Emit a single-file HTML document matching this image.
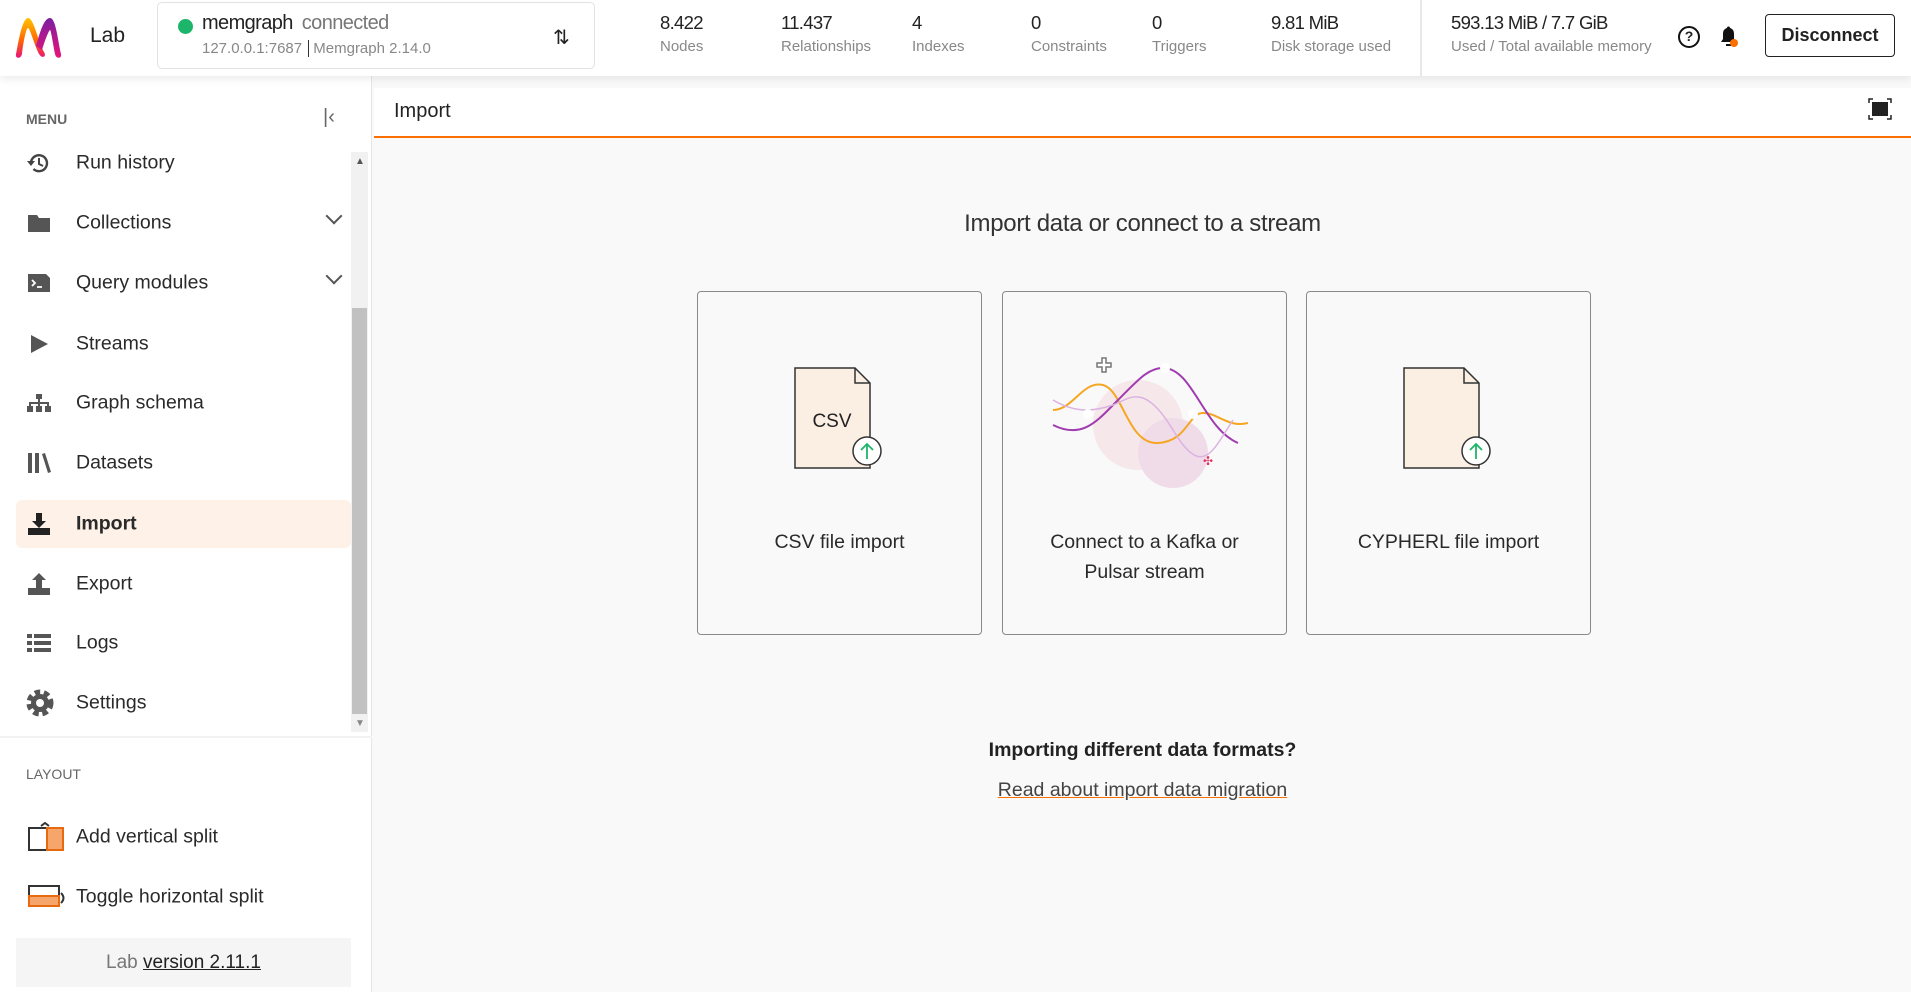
<!DOCTYPE html>
<html><head><meta charset="utf-8"><style>
*{box-sizing:border-box;margin:0;padding:0}
body{width:1911px;height:992px;overflow:hidden;background:#f9f9f9;font-family:"Liberation Sans",sans-serif;color:#222;position:relative}
.abs{position:absolute}
.hdr{left:0;top:0;width:1911px;height:76px;background:#fff;box-shadow:0 3px 8px rgba(0,0,0,.08);z-index:2}
.conn{left:157px;top:2px;width:438px;height:67px;border:1px solid #e2e2e2;border-radius:5px}
.stv{font-size:18.5px;letter-spacing:-.7px;color:#222}
.stl{font-size:15px;color:#888}
.side{left:0;top:76px;width:372px;height:916px;background:#fff;border-right:1px solid #e6e6e6}
.mi{position:absolute;left:76px;font-size:19.5px;color:#2a2a2a;transform:translateY(-50%)}
.ic{position:absolute;left:27px;transform:translateY(-50%)}
.card{position:absolute;top:291px;width:285px;height:344px;border:1.5px solid #8a8a8a;border-radius:4px;background:#f9f9f9}
.ct{position:absolute;left:0;right:0;text-align:center;font-size:19.5px;color:#2a2a2a;line-height:30px}
</style></head><body>
<div class="abs hdr">
  <svg class="abs" style="left:14px;top:14px" width="50" height="46" viewBox="0 0 50 46"><defs><linearGradient id="g" x1="0" y1="0" x2="0" y2="1"><stop offset="0" stop-color="#ffc400"/><stop offset=".55" stop-color="#ff6a00"/><stop offset="1" stop-color="#e8147a"/></linearGradient><linearGradient id="g2" x1="0" y1="0" x2="0" y2="1"><stop offset="0" stop-color="#7b1fa2"/><stop offset="1" stop-color="#e8147a"/></linearGradient></defs><path d="M2 40 C4 30 8 4 14 4 C20 4 24 28 30 38 C33 43 28 45 25 40 C20 30 16 14 14 14 C12 14 9 30 8 40 C7 45 1 45 2 40z" fill="url(#g)"/><path d="M22 32 C26 18 30 4 36 4 C42 4 44 28 47 40 C48 45 42 45 41 40 C39 30 37 16 36 16 C35 16 31 26 28 36z" fill="url(#g2)"/></svg>
  <div class="abs" style="left:90px;top:24px;font-size:21px">Lab</div>
  <div class="abs conn">
    <div class="abs" style="left:20px;top:16px;width:15px;height:15px;border-radius:50%;background:#1db56a"></div>
    <div class="abs" style="left:44px;top:9px;font-size:20px;letter-spacing:-.6px">memgraph <span style="color:#777;margin-left:4px">connected</span></div>
    <div class="abs" style="left:44px;top:37px;font-size:15px;color:#888">127.0.0.1:7687 <span style="border-left:1.5px solid #333;padding-left:4px;margin-left:2px">Memgraph 2.14.0</span></div>
    <div class="abs" style="left:395px;top:22px;font-size:20px">⇅</div>
  </div>
  <div class="abs" style="left:660px;top:12px"><div class="stv">8.422</div><div class="stl" style="margin-top:4px">Nodes</div></div>
  <div class="abs" style="left:781px;top:12px"><div class="stv">11.437</div><div class="stl" style="margin-top:4px">Relationships</div></div>
  <div class="abs" style="left:912px;top:12px"><div class="stv">4</div><div class="stl" style="margin-top:4px">Indexes</div></div>
  <div class="abs" style="left:1031px;top:12px"><div class="stv">0</div><div class="stl" style="margin-top:4px">Constraints</div></div>
  <div class="abs" style="left:1152px;top:12px"><div class="stv">0</div><div class="stl" style="margin-top:4px">Triggers</div></div>
  <div class="abs" style="left:1271px;top:12px"><div class="stv">9.81 MiB</div><div class="stl" style="margin-top:4px">Disk storage used</div></div>
  <div class="abs" style="left:1420px;top:0;width:2px;height:76px;background:#e8e8e8"></div>
  <div class="abs" style="left:1451px;top:12px"><div class="stv">593.13 MiB / 7.7 GiB</div><div class="stl" style="margin-top:4px">Used / Total available memory</div></div>
  <div class="abs" style="left:1678px;top:26px;width:22px;height:22px;border:2.5px solid #111;border-radius:50%;font-size:14px;font-weight:bold;text-align:center;line-height:17px">?</div>
  <svg class="abs" style="left:1718px;top:25px" width="22" height="24" viewBox="0 0 22 24"><path d="M9 3a1.5 1.5 0 013 0c3 1 4 3 4 6v5l2 3H3l2-3V9c0-3 1-5 4-6z" fill="#111"/><rect x="8" y="19" width="5" height="2" fill="#111"/><circle cx="16" cy="18" r="4" fill="#fb6e00"/></svg>
  <div class="abs" style="left:1765px;top:14px;width:130px;height:43px;border:1.5px solid #222;border-radius:4px;text-align:center;line-height:40px;font-size:18px;font-weight:bold">Disconnect</div>
</div>

<div class="abs side">
  <div class="abs" style="left:26px;top:35px;font-size:14px;color:#666;font-weight:bold">MENU</div>
  <div class="abs" style="left:323px;top:30px;font-size:20px;color:#666">|&lsaquo;</div>
  <div class="abs" style="left:351px;top:76px;width:17px;height:580px;background:#f1f1f1"></div>
  <div class="abs" style="left:352px;top:232px;width:15px;height:406px;background:#c1c1c1"></div>
  <div class="abs" style="left:355px;top:80px;font-size:10px;color:#555">▲</div>
  <div class="abs" style="left:355px;top:642px;font-size:10px;color:#888">▼</div>
  <div class="abs" style="left:16px;top:424px;width:335px;height:48px;background:#fdf1e8;border-radius:6px"></div>
</div>
<div class="abs" style="left:0;top:76px;width:372px;height:916px">
  <svg class="ic" style="top:87px" width="24" height="22" viewBox="0 0 24 22"><path d="M4 11a8 8 0 1 1 2.5 6" stroke="#444" stroke-width="2.4" fill="none"/><path d="M0 9h8l-4 5z" fill="#444"/><path d="M12 6v6l4 2" stroke="#444" stroke-width="2" fill="none"/></svg><div class="mi" style="top:87px">Run history</div>
  <svg class="ic" style="top:147px" width="24" height="20" viewBox="0 0 24 20"><path d="M1 2h9l2 3h11v14H1z" fill="#555"/></svg><div class="mi" style="top:147px">Collections</div><div class="abs" style="left:328px;top:134px;width:12px;height:12px;border-right:2px solid #555;border-bottom:2px solid #555;transform:rotate(45deg)"></div>
  <svg class="ic" style="top:207px" width="24" height="20" viewBox="0 0 24 20"><path d="M1 1h18l4 4v14H1z" fill="#555"/><path d="M5 7l3 3-3 3M10 14h5" stroke="#fff" stroke-width="1.8" fill="none"/></svg><div class="mi" style="top:207px">Query modules</div><div class="abs" style="left:328px;top:194px;width:12px;height:12px;border-right:2px solid #555;border-bottom:2px solid #555;transform:rotate(45deg)"></div>
  <svg class="ic" style="top:268px" width="24" height="22" viewBox="0 0 24 22"><path d="M4 2l17 9-17 9z" fill="#555"/></svg><div class="mi" style="top:268px">Streams</div>
  <svg class="ic" style="top:327px" width="24" height="20" viewBox="0 0 24 20"><rect x="9" y="1" width="6" height="5" fill="#555"/><path d="M12 6v4M3 13v-3h18v3M12 10v3" stroke="#555" stroke-width="2" fill="none"/><rect x="0" y="13" width="6" height="6" fill="#555"/><rect x="9" y="13" width="6" height="6" fill="#555"/><rect x="18" y="13" width="6" height="6" fill="#555"/></svg><div class="mi" style="top:327px">Graph schema</div>
  <svg class="ic" style="top:387px" width="24" height="22" viewBox="0 0 24 22"><rect x="1" y="1" width="4" height="20" fill="#555"/><rect x="8" y="1" width="4" height="20" fill="#555"/><path d="M15 2l3-1 6 19-3 1z" fill="#555"/></svg><div class="mi" style="top:387px">Datasets</div>
  <svg class="ic" style="top:448px" width="24" height="24" viewBox="0 0 24 24"><path d="M9 1h6v8h4l-7 7-7-7h4z" fill="#222"/><rect x="1" y="16" width="22" height="7" fill="#222"/></svg><div class="mi" style="top:448px;font-weight:bold">Import</div>
  <svg class="ic" style="top:508px" width="24" height="24" viewBox="0 0 24 24"><path d="M9 16h6V8h4l-7-7-7 7h4z" fill="#555"/><rect x="1" y="16" width="22" height="7" fill="#555"/></svg><div class="mi" style="top:508px">Export</div>
  <svg class="ic" style="top:567px" width="24" height="20" viewBox="0 0 24 20"><g fill="#555"><rect x="0" y="1" width="5" height="4"/><rect x="7" y="1" width="17" height="4"/><rect x="0" y="8" width="5" height="4"/><rect x="7" y="8" width="17" height="4"/><rect x="0" y="15" width="5" height="4"/><rect x="7" y="15" width="17" height="4"/></g></svg><div class="mi" style="top:567px">Logs</div>
  <svg class="ic" style="top:627px;left:24px" width="32" height="32" viewBox="0 0 32 32"><circle cx="16" cy="16" r="10" fill="none" stroke="#555" stroke-width="7" stroke-dasharray="5 3.4"/><circle cx="16" cy="16" r="9" fill="#555"/><circle cx="16" cy="16" r="4" fill="#fff"/></svg><div class="mi" style="top:627px">Settings</div>
  <div class="abs" style="left:0;top:660px;width:372px;height:2px;background:#f3f3f3"></div>
  <div class="abs" style="left:26px;top:690px;font-size:14px;color:#666">LAYOUT</div>
  <svg class="ic" style="top:761px" width="38" height="30" viewBox="0 0 38 30"><rect x="2" y="6" width="18" height="22" fill="none" stroke="#333" stroke-width="2"/><rect x="20" y="6" width="16" height="22" fill="#f7a66b" stroke="#e86a10" stroke-width="2"/><path d="M14 4l4-3 4 3" stroke="#333" stroke-width="2" fill="none"/></svg><div class="mi" style="top:761px">Add vertical split</div>
  <svg class="ic" style="top:821px" width="40" height="28" viewBox="0 0 40 28"><rect x="2" y="3" width="30" height="10" fill="none" stroke="#333" stroke-width="2"/><rect x="2" y="13" width="30" height="10" fill="#f7a66b" stroke="#e86a10" stroke-width="2"/><path d="M34 10q5 5 0 10" stroke="#333" stroke-width="2" fill="none"/></svg><div class="mi" style="top:821px">Toggle horizontal split</div>
  <div class="abs" style="left:16px;top:862px;width:335px;height:49px;background:#f5f5f5;text-align:center;line-height:49px;font-size:19px;color:#777">Lab <span style="color:#222;text-decoration:underline">version 2.11.1</span></div>
</div>

<div class="abs" style="left:374px;top:88px;width:1537px;height:50px;background:#fff;border-bottom:2px solid #fb6e00">
  <div class="abs" style="left:20px;top:12px;font-size:20px;color:#222">Import</div>
  <svg class="abs" style="left:1494px;top:10px" width="24" height="22" viewBox="0 0 24 22"><rect x="4" y="4" width="16" height="14" fill="#222"/><path d="M1 5V1h4M19 1h4v4M23 17v4h-4M5 21H1v-4" stroke="#222" stroke-width="1.5" fill="none"/></svg>
</div>

<div class="abs" style="left:374px;width:1537px;top:210px;text-align:center;font-size:24px;color:#333;letter-spacing:-.3px">Import data or connect to a stream</div>

<div class="card" style="left:697px">
  <svg class="abs" style="left:96px;top:75px" width="95" height="105" viewBox="0 0 95 105"><path d="M1 1h60l15 15v85H1z" fill="#fbeee3" stroke="#333" stroke-width="1.5"/><path d="M61 1v15h15" fill="none" stroke="#333" stroke-width="1.5"/><text x="38" y="60" font-size="19" text-anchor="middle" font-family="Liberation Sans" fill="#222">CSV</text><circle cx="73" cy="84" r="14" fill="#fff" stroke="#333" stroke-width="1.5"/><path d="M73 92V77M67 83l6-6 6 6" stroke="#1db56a" stroke-width="1.8" fill="none"/></svg>
  <div class="ct" style="top:235px">CSV file import</div>
</div>
<div class="card" style="left:1002px">
  <svg class="abs" style="left:45px;top:58px" width="200" height="150" viewBox="0 0 200 150"><circle cx="90" cy="75" r="45" fill="#f6e8ea"/><circle cx="125" cy="103" r="35" fill="#f0dce8"/><path d="M5 60c20 0 30-30 50-25s25 60 55 58s30-30 45-30c15 0 25 15 45 10" stroke="#f5a623" stroke-width="2" fill="none"/><path d="M5 75c30 15 45-5 65-25s30-32 45-32c30 0 40 60 75 75" stroke="#a03cb0" stroke-width="2" fill="none"/><path d="M5 50c25 15 45 10 60 5s30-25 60 25s40 20 60-10" stroke="#dcb2e0" stroke-width="1.5" fill="none"/><circle cx="40" cy="64" r="5" fill="#fff"/><circle cx="117" cy="18" r="5" fill="#fff"/><circle cx="145" cy="64" r="5" fill="#fff"/><path d="M54 8h4v5h5v4h-5v5h-4v-5h-5v-4h5z" fill="#fff" stroke="#777" stroke-width="1.5"/><text x="155" y="115" fill="#e03060" font-size="12">✣</text></svg>
  <div class="ct" style="top:235px">Connect to a Kafka or<br>Pulsar stream</div>
</div>
<div class="card" style="left:1306px">
  <svg class="abs" style="left:96px;top:75px" width="95" height="105" viewBox="0 0 95 105"><path d="M1 1h60l15 15v85H1z" fill="#fbeee3" stroke="#333" stroke-width="1.5"/><path d="M61 1v15h15" fill="none" stroke="#333" stroke-width="1.5"/><circle cx="73" cy="84" r="14" fill="#fff" stroke="#333" stroke-width="1.5"/><path d="M73 92V77M67 83l6-6 6 6" stroke="#1db56a" stroke-width="1.8" fill="none"/></svg>
  <div class="ct" style="top:235px">CYPHERL file import</div>
</div>

<div class="abs" style="left:374px;width:1537px;top:739px;text-align:center;font-size:19.5px;font-weight:bold;color:#222">Importing different data formats?</div>
<div class="abs" style="left:374px;width:1537px;top:779px;text-align:center;font-size:19.5px;color:#444"><span style="text-decoration:underline;text-decoration-color:#fb6e00">Read about import data migration</span></div>
</body></html>
